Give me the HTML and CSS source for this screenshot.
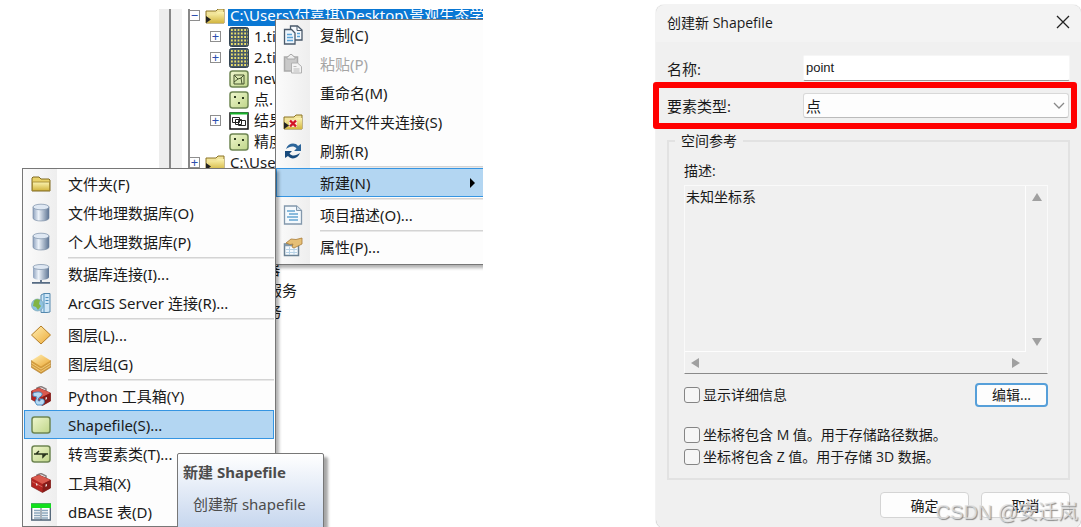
FILE: index.html
```html
<!DOCTYPE html>
<html lang="zh-CN">
<head>
    <meta charset="UTF-8">
    <meta name="viewport" content="width=device-width, initial-scale=1.0">
    <title>创建新 Shapefile</title>
    <link rel="stylesheet" href="styles.css">
</head>
<body>
    <!-- icons -->
    <svg class="defs" width="0" height="0" aria-hidden="true">
        <defs>
            <linearGradient id="gold" x1="0" y1="0" x2="0" y2="1"><stop offset="0" stop-color="#fbf3b0"/><stop offset="1" stop-color="#d3b640"/></linearGradient>
            <linearGradient id="green" x1="0" y1="0" x2="1" y2="1"><stop offset="0" stop-color="#f0f7cf"/><stop offset="1" stop-color="#bfd588"/></linearGradient>
            <linearGradient id="steel" x1="0" y1="0" x2="1" y2="0"><stop offset="0" stop-color="#8ea2be"/><stop offset="0.35" stop-color="#edf3fa"/><stop offset="1" stop-color="#5d7493"/></linearGradient>
            <linearGradient id="amber" x1="0" y1="0" x2="1" y2="1"><stop offset="0" stop-color="#fff0b5"/><stop offset="1" stop-color="#eca936"/></linearGradient>
        </defs>
        <symbol id="i-folder" viewBox="0 0 20 20">
            <path d="M1 17V4l1-1h6l2 2h8l1 1v11z" fill="#e9d26a" stroke="#806a20"/>
            <path d="M1.500 16.500V8h17v8.500z" fill="url(#gold)" stroke="#9a812c" stroke-width=".8"/>
        </symbol>
        <symbol id="i-folderlink" viewBox="0 0 20 20">
            <path d="M1 17V5h10l2-2h6v14z" fill="#f1e39a" stroke="#8c7425"/>
            <path d="M3 17V8h8l2-2h6v11z" fill="url(#gold)"/>
            <path d="M1 10l5 3.500L1 17z" fill="#222"/>
        </symbol>
        <symbol id="i-unlink" viewBox="0 0 20 20">
            <use href="#i-folderlink"/>
            <path d="M6 8h8v7H6z" fill="#f7e6d2"/>
            <path d="M7 8.500l6 6M13 8.500l-6 6" stroke="#d31225" stroke-width="2.400"/>
        </symbol>
        <symbol id="i-raster" viewBox="0 0 20 20">
            <rect x=".5" y=".5" width="19" height="19" rx="2" fill="#465866" stroke="#344552"/>
            <path d="M2 3h17M2 6.500h17M2 10h17M2 13.500h17M2 17h17" stroke="#eadf6b" stroke-width="1.800" stroke-dasharray="1.800 1.500"/>
        </symbol>
        <symbol id="i-layer" viewBox="0 0 20 20">
            <rect x="1" y="2" width="18" height="16" rx="2.500" fill="url(#green)" stroke="#6f8653" stroke-width="1.500"/>
        </symbol>
        <symbol id="i-points" viewBox="0 0 20 20">
            <use href="#i-layer"/>
            <path d="M5 6h2v2H5zM13 7h2v2h-2zM9 12h2v2H9z" fill="#2e3b20"/>
        </symbol>
        <symbol id="i-polygon" viewBox="0 0 20 20">
            <use href="#i-layer"/>
            <path d="M5 6h10v9H5zM5 6l4 4 3-1 3-3M9 10l-4 3M12 9l1 6" fill="#d7e7ad" stroke="#46552f"/>
        </symbol>
        <symbol id="i-turn" viewBox="0 0 20 20">
            <use href="#i-layer"/>
            <path d="M3 10h14M8 7l-3 3M12 10v3l3-3" fill="none" stroke="#28331c" stroke-width="1.500"/>
        </symbol>
        <symbol id="i-table" viewBox="0 0 20 20">
            <rect x="1" y="2" width="18" height="16" fill="#fff" stroke="#111" stroke-width="1.500"/>
            <path d="M1 2.500h18" stroke="#16b42a" stroke-width="2"/>
            <path d="M3.500 6.500h7v5h-7zM6.500 8.500h6v5h-6zM9.500 9.500h7v5h-7z" fill="#fff" stroke="#222"/>
        </symbol>
        <symbol id="i-copy" viewBox="0 0 20 20">
            <path d="M7.500 1h7L19 5v10H7.500z" fill="#f5f9fd" stroke="#4a5a6b" stroke-width="1.300"/>
            <path d="M14 1v4.500h5" fill="none" stroke="#4a5a6b"/>
            <path d="M1.500 4.500h7L12 8v11H1.500z" fill="#edf5fc" stroke="#4a5a6b" stroke-width="1.300"/>
            <path d="M4 9.500h5M4 12.500h6M4 15.500h6M14 8.500h3M14 11.500h3" stroke="#5ba4d6" stroke-width="1.300"/>
        </symbol>
        <symbol id="i-paste" viewBox="0 0 20 20">
            <path d="M1.500 3h13v14h-13z" fill="#c9c9c9" stroke="#aaa" stroke-width="1.500"/>
            <path d="M4 5V3l2-1 1-1.500h2L10 2l2 1v2z" fill="#eee" stroke="#aaa"/>
            <path d="M8.500 9h6l4 3.500V19h-10z" fill="#f3f3f3" stroke="#b0b0b0"/>
            <path d="M10.500 12.500h3M10.500 15h6M10.500 17h6" stroke="#bbb"/>
        </symbol>
        <symbol id="i-refresh" viewBox="0 0 20 20">
            <path d="M3 8c2-6 9-7 12-3l3-2v7h-7l2.500-2.500C11 4.500 7 5 3 8z" fill="#2c659a"/>
            <path d="M17 12c-2 6-9 7-12 3l-3 2v-7h7l-2.500 2.500C9 15.500 13 15 17 12z" fill="#174a7c"/>
        </symbol>
        <symbol id="i-doc" viewBox="0 0 20 20">
            <path d="M1.500 1h12L18.500 5.500V19h-17z" fill="#f4f9fd" stroke="#8398ac" stroke-width="1.300"/>
            <path d="M13.500 1v4.500h5" fill="#d9e5ef" stroke="#8398ac"/>
            <path d="M4 6h8M6 9h9M4 12h11M6 15h9" stroke="#65a5d1" stroke-width="1.500"/>
        </symbol>
        <symbol id="i-props" viewBox="0 0 20 20">
            <path d="M1.500 7h14v11.500h-14z" fill="#f5fafe" stroke="#6b8295" stroke-width="1.500"/>
            <path d="M1.500 8h14" stroke="#8198aa" stroke-width="2.500"/>
            <path d="M3 12.500h11M3 15.500h11M6.500 10v8M11 10v8" stroke="#b8d3e7"/>
            <path d="M3 6l5-4 5 .5L19 1v6l-4 2-4 2-2-1 1-3-3 .5z" fill="#e5bf76" stroke="#a97c38" stroke-width=".8"/>
        </symbol>
        <symbol id="i-db" viewBox="0 0 20 20">
            <path d="M2 4v11c0 4 16 4 16 0V4z" fill="url(#steel)" stroke="#71849d" stroke-width=".6"/>
            <ellipse cx="10" cy="4" rx="8" ry="2.800" fill="#dfe8f3" stroke="#8799b0" stroke-width=".8"/>
        </symbol>
        <symbol id="i-dbconn" viewBox="0 0 20 20">
            <path d="M2 3v10c0 4 16 4 16 0V3z" fill="url(#steel)"/>
            <ellipse cx="10" cy="3" rx="8" ry="2.500" fill="#dfe8f3" stroke="#8799b0" stroke-width=".8"/>
            <path d="M10 16v2M1 18.800h18" stroke="#566b83" stroke-width="1.800"/>
        </symbol>
        <symbol id="i-server" viewBox="0 0 20 20">
            <path d="M10 2l3-1.500h6V19l-3 .5h-6z" fill="#cfe6f6" stroke="#5488ad"/>
            <path d="M13 1v18M14.500 4.500h3M14.500 7.500h3M14.500 10.500h3" stroke="#4f91bf"/>
            <circle cx="6.500" cy="12" r="6" fill="#8fc3df" stroke="#6a9aaf" stroke-width=".6"/>
            <path d="M3 8c3-3 4-1 6-1l-1 4 2 2-3 4-2-3-3-1z" fill="#82b444"/>
        </symbol>
        <symbol id="i-diamond" viewBox="0 0 20 20">
            <path d="M10 1l9.500 9L10 19 .5 10z" fill="url(#amber)" stroke="#b47d26"/>
        </symbol>
        <symbol id="i-group" viewBox="0 0 20 20">
            <path d="M.5 6.500v7L10 19.500l9.500-6v-7z" fill="#d49c3c" stroke="#ad782b" stroke-width=".6"/>
            <path d="M.5 9l9.500 6 9.500-6M.5 11.500l9.500 6 9.500-6" fill="none" stroke="#f5d486" stroke-width=".8"/>
            <path d="M10 .5l9.500 6L10 12.500l-9.500-6z" fill="url(#amber)"/>
        </symbol>
        <symbol id="i-toolbox" viewBox="0 0 20 20">
            <path d="M6 4V2l4-1.500L15 3v3" fill="none" stroke="#8b8080" stroke-width="1.500"/>
            <path d="M.5 5L8 2l11.500 5v8l-8 4.500-11-6z" fill="#b32421" stroke="#701916" stroke-width=".6"/>
            <path d="M.5 5L8 2l11.500 5-8 4z" fill="#d95a4e"/>
            <path d="M11.500 11v8.500l8-4.500V7z" fill="#861c19"/>
            <path d="M1 8.500l10.500 5.500" fill="none" stroke="#de6f62" stroke-width=".8"/>
            <path d="M5 10v2.500h1.500V11zM14.500 11.500V14l1.500-1v-2z" fill="#e6dddb"/>
        </symbol>
        <symbol id="i-python" viewBox="0 0 20 20">
            <use href="#i-toolbox"/>
            <path d="M2 7c5-2 10-1 9 2-1 2-4 2-4 5 0 1 1 1 2 1v-2h3c2 1 2 5-1 6H6l-2-3 2-5-4-1z" fill="#b7d9f2" stroke="#3e86be" stroke-width=".9"/>
        </symbol>
        <symbol id="i-dbase" viewBox="0 0 20 20">
            <path d="M.7 2h18.600v16H.7z" fill="#fff" stroke="#4e6275" stroke-width="1.300"/>
            <path d="M0 1.500h20V6H0z" fill="#12df1c"/>
            <path d="M3 8.500h6M3 11h6M3 13.500h6M3 16h6M11 8.500h6M11 11h6M11 13.500h6M11 16h6" stroke="#8ba6bc" stroke-width="1.300"/>
            <path d="M10 6v12" stroke="#4e6275"/>
        </symbol>
    </svg>

    <main class="page">
        <section class="catalog">
            <div class="rail"></div>
            <div class="tree-panel">
                <ul class="tree">
                    <li class="selected"><span class="toggle">−</span><svg class="icon"><use href="#i-folderlink"/></svg><span class="node">C:\Users\付嘉琪\Desktop\景观生态学</span></li>
                    <li class="child"><span class="toggle">+</span><svg class="icon"><use href="#i-raster"/></svg><span class="node">1.tif</span></li>
                    <li class="child"><span class="toggle">+</span><svg class="icon"><use href="#i-raster"/></svg><span class="node">2.tif</span></li>
                    <li class="child"><span class="toggle none"></span><svg class="icon"><use href="#i-polygon"/></svg><span class="node">new</span></li>
                    <li class="child"><span class="toggle none"></span><svg class="icon"><use href="#i-points"/></svg><span class="node">点.</span></li>
                    <li class="child"><span class="toggle">+</span><svg class="icon"><use href="#i-table"/></svg><span class="node">结果</span></li>
                    <li class="child"><span class="toggle none"></span><svg class="icon"><use href="#i-points"/></svg><span class="node">精度</span></li>
                    <li><span class="toggle">+</span><svg class="icon"><use href="#i-folderlink"/></svg><span class="node">C:\Users</span></li>
                </ul>
                <ul class="tree services">
                    <li>GIS 服务器</li>
                    <li>我的托管服务</li>
                    <li>即用型服务</li>
                </ul>
            </div>

            <ul class="menu context-menu">
                <li><button><svg class="icon"><use href="#i-copy"/></svg>复制(C)</button></li>
                <li><button disabled><svg class="icon"><use href="#i-paste"/></svg>粘贴(P)</button></li>
                <li><button><span class="icon"></span>重命名(M)</button></li>
                <li><button><svg class="icon"><use href="#i-unlink"/></svg>断开文件夹连接(S)</button></li>
                <li><button><svg class="icon"><use href="#i-refresh"/></svg>刷新(R)</button></li>
                <li class="line"></li>
                <li><button class="active"><span class="icon"></span>新建(N)<span class="arrow"></span></button></li>
                <li class="line"></li>
                <li><button><svg class="icon"><use href="#i-doc"/></svg>项目描述(O)...</button></li>
                <li class="line"></li>
                <li><button><svg class="icon"><use href="#i-props"/></svg>属性(P)...</button></li>
            </ul>

            <ul class="menu sub-menu">
                <li><button><svg class="icon"><use href="#i-folder"/></svg>文件夹(F)</button></li>
                <li><button><svg class="icon"><use href="#i-db"/></svg>文件地理数据库(O)</button></li>
                <li><button><svg class="icon"><use href="#i-db"/></svg>个人地理数据库(P)</button></li>
                <li class="line"></li>
                <li><button><svg class="icon"><use href="#i-dbconn"/></svg>数据库连接(I)...</button></li>
                <li><button><svg class="icon"><use href="#i-server"/></svg>ArcGIS Server 连接(R)...</button></li>
                <li class="line"></li>
                <li><button><svg class="icon"><use href="#i-diamond"/></svg>图层(L)...</button></li>
                <li><button><svg class="icon"><use href="#i-group"/></svg>图层组(G)</button></li>
                <li class="line"></li>
                <li><button><svg class="icon"><use href="#i-python"/></svg>Python 工具箱(Y)</button></li>
                <li><button class="active"><svg class="icon"><use href="#i-layer"/></svg>Shapefile(S)...</button></li>
                <li><button><svg class="icon"><use href="#i-turn"/></svg>转弯要素类(T)...</button></li>
                <li><button><svg class="icon"><use href="#i-toolbox"/></svg>工具箱(X)</button></li>
                <li><button><svg class="icon"><use href="#i-dbase"/></svg>dBASE 表(D)</button></li>
            </ul>

            <div class="tooltip" role="tooltip">
                <strong>新建 Shapefile</strong>
                <p>创建新 shapefile</p>
            </div>
        </section>

        <section class="dialog">
            <header class="titlebar">
                <h1>创建新 Shapefile</h1>
                <button class="close" aria-label="关闭">
                    <svg width="14" height="14" viewBox="0 0 14 14"><path d="M1 1l12 12M13 1L1 13" stroke="#222" stroke-width="1.300"/></svg>
                </button>
            </header>
            <form class="content">
                <div class="field">
                    <label for="name">名称:</label>
                    <input type="text" id="name" value="point">
                </div>
                <div class="field marked">
                    <label for="type">要素类型:</label>
                    <div class="select">
                        <select id="type"><option>点</option></select>
                        <svg width="12" height="8" viewBox="0 0 12 8"><path d="M1 1l5 5 5-5" fill="none" stroke="#888" stroke-width="1.300"/></svg>
                    </div>
                </div>

                <fieldset>
                    <legend>空间参考</legend>
                    <label for="desc">描述:</label>
                    <div class="scrollbox">
                        <textarea id="desc" readonly>未知坐标系</textarea>
                        <div class="scroll-v"><span class="up"></span><span class="down"></span></div>
                        <div class="scroll-h"><span class="left"></span><span class="right"></span></div>
                    </div>
                    <div class="details">
                        <label class="check"><input type="checkbox">显示详细信息</label>
                        <button type="button" class="edit">编辑...</button>
                    </div>
                    <label class="check"><input type="checkbox">坐标将包含 M 值。用于存储路径数据。</label>
                    <label class="check"><input type="checkbox">坐标将包含 Z 值。用于存储 3D 数据。</label>
                </fieldset>

                <div class="actions">
                    <button type="button">确定</button>
                    <button type="button">取消</button>
                </div>
            </form>
            <div class="watermark">CSDN @安迁岚</div>
        </section>
    </main>
</body>
</html>
```
FILE: styles.css
```css
* {
    box-sizing: border-box;
}
body {
    margin: 0;
    background-color: #fff;
    color: #1a1a1a;
    font-family: "Noto Sans", "Noto Sans CJK SC", sans-serif;
    font-size: 15px;
}
ul {
    list-style: none;
    margin: 0;
    padding: 0;
}
button, input, select, textarea {
    font: inherit;
    color: inherit;
}
.defs {
    position: absolute;
}
.page {
    display: flex;
    justify-content: space-between;
    height: 100vh;
    overflow: hidden;
}
.icon {
    flex: none;
    width: 20px;
    height: 20px;
}

/* catalog tree */
.catalog {
    position: relative;
    flex: none;
    display: flex;
    width: 483px;
    padding: 9px 0 0 159px;
    overflow: hidden;
}
.rail {
    flex: none;
    width: 29px;
    background: linear-gradient(to right, #ededed 10px, #888 10px, #888 12px, #f2f2f2 12px, #f2f2f2 23px, #fff 23px);
}
.tree-panel {
    flex: 1;
    min-width: 0;
    border-left: 2px solid #888;
    overflow: hidden;
}
.tree {
    margin-top: -4px;
}
.tree li {
    display: flex;
    align-items: center;
    height: 21px;
    line-height: 21px;
    white-space: nowrap;
}
.tree .child {
    padding-left: 20px;
}
.toggle {
    flex: none;
    width: 11px;
    height: 11px;
    margin-right: 8px;
    border: 1px solid #8e8e8e;
    background-color: #fff;
    color: #2d4fae;
    font-size: 13px;
    line-height: 9px;
    text-align: center;
}
.tree > li:not(.child) .toggle {
    margin-right: 5px;
    margin-left: -1px;
}
.toggle.none {
    visibility: hidden;
}
.node {
    padding: 0 5px;
}
.selected .node {
    flex: 1;
    margin-left: 3px;
    padding: 0 2px;
    background-color: #0a78d4;
    color: #fff;
}
.services {
    margin-top: 86px;
    padding-left: 17px;
}

/* menus */
.menu {
    position: absolute;
    background: linear-gradient(to right, #fbfbfb, #eee 34px, #fdfdfd 34px);
    border: 1px solid #777;
    box-shadow: 3px 3px 3px rgba(0, 0, 0, 0.3);
}
.context-menu {
    top: 19px;
    left: 275px;
    width: 214px;
    padding: 0 0 3px;
}
.sub-menu {
    top: 168px;
    left: 22px;
    width: 254px;
    padding: 0 1px;
}
.menu button {
    display: flex;
    align-items: center;
    gap: 17px;
    width: 100%;
    height: 29px;
    padding: 0 6px;
    border: 1px solid transparent;
    background: none;
    text-align: left;
    white-space: nowrap;
}
.menu button:disabled {
    color: #a5a5a5;
}
.menu button.active {
    border-color: #3595e2;
    background-color: #b3d6f2;
}
.menu .line {
    height: 3px;
    margin-left: 44px;
    background: linear-gradient(transparent 1px, #d4d4d4 1px, #d4d4d4 2px, #e8e8e8 2px);
}
.arrow {
    margin-left: auto;
    margin-right: 6px;
    border: 5px solid transparent;
    border-right: 0;
    border-left-color: #000;
}

.tooltip {
    position: absolute;
    top: 453px;
    left: 177px;
    width: 147px;
    height: 90px;
    padding: 8px 5px;
    border: 1px solid #777;
    border-radius: 2px;
    background: linear-gradient(#fff, #c6d6ee 74px);
    box-shadow: 4px 4px 3px rgba(0, 0, 0, 0.35);
    color: #4c4c4c;
    font-size: 15px;
    line-height: 20px;
    white-space: nowrap;
}
.tooltip p {
    margin: 12px 0 0 10px;
}

/* dialog */
.dialog {
    position: relative;
    flex: none;
    align-self: flex-start;
    width: 425px;
    margin-top: 5px;
    border-radius: 8px;
    background-color: #f0f0f0;
    box-shadow: 0 0 1px #888;
    font-family: "Open Sans", "Noto Sans CJK SC", sans-serif;
    font-size: 14px;
}
.titlebar {
    display: flex;
    align-items: center;
    justify-content: space-between;
    height: 37px;
    padding: 0 11px 3px;
    border-radius: 8px 8px 0 0;
    background-color: #f3f3f3;
}
.titlebar h1 {
    margin: 0;
    font-size: 14px;
    font-weight: normal;
}
.close {
    display: flex;
    padding: 0;
    border: none;
    background: none;
}
.content {
    padding: 13px 11px 10px;
}
.field {
    display: grid;
    grid-template-columns: 136px 1fr;
    align-items: center;
    font-size: 15px;
}
.field input {
    width: 100%;
    height: 26px;
    padding: 0 2px 2px;
    border: 1px solid #f6f6f6;
    border-bottom-color: #999;
    border-radius: 2px;
    background-color: #fff;
    font-family: "Liberation Sans", sans-serif;
    font-size: 13px;
}
.marked {
    height: 47px;
    margin: 1px -7px 2px -14px;
    padding: 0 2px 0 8px;
    border: 6px solid #f00;
    border-radius: 3px;
}
.select {
    position: relative;
}
.select select {
    display: block;
    width: 100%;
    height: 25px;
    padding: 0 2px;
    border: 1px solid #d8d8d8;
    border-bottom-color: #bbb;
    border-radius: 3px;
    background-color: #fdfdfd;
    appearance: none;
}
.select svg {
    position: absolute;
    top: 9px;
    right: 4px;
    pointer-events: none;
}
fieldset {
    margin: 0;
    padding: 10px 20px 10px 15px;
    border: 2px solid #e2e2e2;
}
legend {
    margin-left: -9px;
    padding: 0 6px;
    line-height: 20px;
}
fieldset > label {
    display: block;
    line-height: 20px;
}
.scrollbox {
    display: grid;
    grid-template-columns: 1fr 21px;
    grid-template-rows: 1fr 21px;
    height: 189px;
    margin-top: 4px;
    border: 1px solid #fafafa;
    border-bottom: 1px solid #8a8a8a;
}
.scrollbox textarea {
    width: 100%;
    height: 100%;
    padding: 0 1px;
    border: solid #fdfdfd;
    border-width: 0 1px 1px 0;
    background: none;
    line-height: 21px;
    resize: none;
    overflow: hidden;
}
.scroll-v, .scroll-h {
    display: flex;
    align-items: center;
    justify-content: space-between;
}
.scroll-v {
    flex-direction: column;
    padding: 7px 0 6px;
}
.scroll-h {
    padding: 0 6px;
}
.scroll-v span, .scroll-h span {
    border: 5px solid transparent;
}
.scroll-v .up {
    border-top: 0;
    border-bottom: 8px solid #a0a0a0;
}
.scroll-v .down {
    border-bottom: 0;
    border-top: 8px solid #a0a0a0;
}
.scroll-h .left {
    border-left: 0;
    border-right: 8px solid #a0a0a0;
}
.scroll-h .right {
    border-right: 0;
    border-left: 8px solid #a0a0a0;
}
.details {
    display: flex;
    align-items: center;
    justify-content: space-between;
    margin: 9px 0 17px;
}
fieldset .check {
    display: flex;
    align-items: center;
    gap: 3px;
    line-height: 22px;
    white-space: nowrap;
}
.check input {
    appearance: none;
    width: 16px;
    height: 16px;
    margin: 0;
    border: 1px solid #858585;
    border-radius: 3px;
    background-color: #f6f6f6;
}
.edit, .actions button {
    border: 1px solid #d4d4d4;
    border-radius: 4px;
    background-color: #fdfdfd;
}
.edit {
    width: 73px;
    height: 24px;
    padding: 0;
    border: 2px solid #569fd9;
    line-height: 18px;
}
.actions {
    display: flex;
    justify-content: flex-end;
    gap: 12px;
    margin-top: 12px;
}
.actions button {
    width: 89px;
    height: 26px;
    padding: 0;
}
.watermark {
    position: absolute;
    right: 3px;
    bottom: 3px;
    color: rgba(225, 225, 225, 0.8);
    font-family: "Liberation Sans", "Noto Sans CJK SC", sans-serif;
    font-size: 20px;
    line-height: 26px;
    text-shadow: 1px 1px 1px #888;
    white-space: nowrap;
    pointer-events: none;
}
```
